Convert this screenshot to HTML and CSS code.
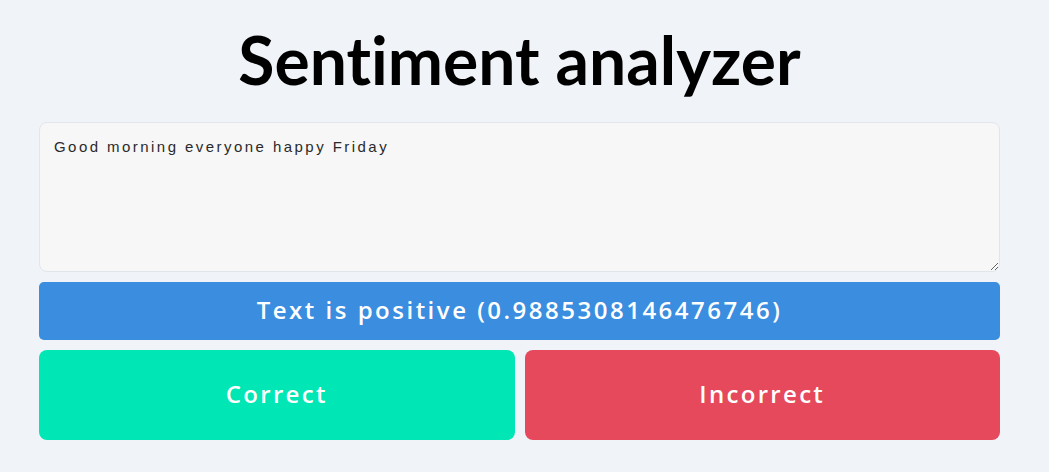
FILE: index.html
```html
<!DOCTYPE html>
<html>
<head>
<meta charset="utf-8">
<link rel="stylesheet" href="styles.css">
</head>
<body>
<main class="app">
  <h1 class="title">Sentiment analyzer</h1>
  <textarea class="input">Good morning everyone happy Friday</textarea>
  <div class="result">Text is positive (0.9885308146476746)</div>
  <div class="actions">
    <button class="btn btn-correct">Correct</button>
    <button class="btn btn-incorrect">Incorrect</button>
  </div>
</main>
</body>
</html>
```

FILE: styles.css
```css
html, body {
  margin: 0;
  padding: 0;
  background: #f0f4f9;
}
body {
  font-family: "Lato", "Inter", sans-serif;
}
.app {
  width: 961px;
  margin-left: 39px;
  padding-top: 17px;
  display: flex;
  flex-direction: column;
}
.title {
  margin: 0 0 19px 0;
  text-align: center;
  font-size: 66px;
  line-height: 86px;
  font-weight: 700;
  color: #000;
  font-variant-ligatures: none;
}
.input {
  box-sizing: border-box;
  width: 961px;
  height: 150px;
  padding: 15px 14px;
  border: 1px solid #e2e6ea;
  border-radius: 8px;
  background: #f7f7f7;
  font-family: "Liberation Sans", Arial, sans-serif;
  font-size: 15px;
  letter-spacing: 2.45px;
  color: #2a2a2a;
  resize: vertical;
  outline: none;
  margin: 0;
  display: block;
}
.result {
  box-sizing: border-box;
  margin-top: 10px;
  height: 58px;
  padding-bottom: 4px;
  border-radius: 5px;
  background: #3a8ddf;
  color: #fff;
  font-family: "Open Sans", sans-serif;
  font-size: 24px;
  font-weight: 600;
  letter-spacing: 2.5px;
  display: flex;
  align-items: center;
  justify-content: center;
}
.actions {
  margin-top: 10px;
  display: flex;
  gap: 10px;
}
.btn {
  flex: 1;
  height: 90px;
  padding: 0 0 4px 0;
  border: none;
  border-radius: 8px;
  color: #fff;
  font-family: "Open Sans", sans-serif;
  font-size: 24px;
  font-weight: 600;
  letter-spacing: 2.3px;
}
.btn-correct {
  background: #00e6b4;
}
.btn-incorrect {
  background: #e5495b;
}
```
